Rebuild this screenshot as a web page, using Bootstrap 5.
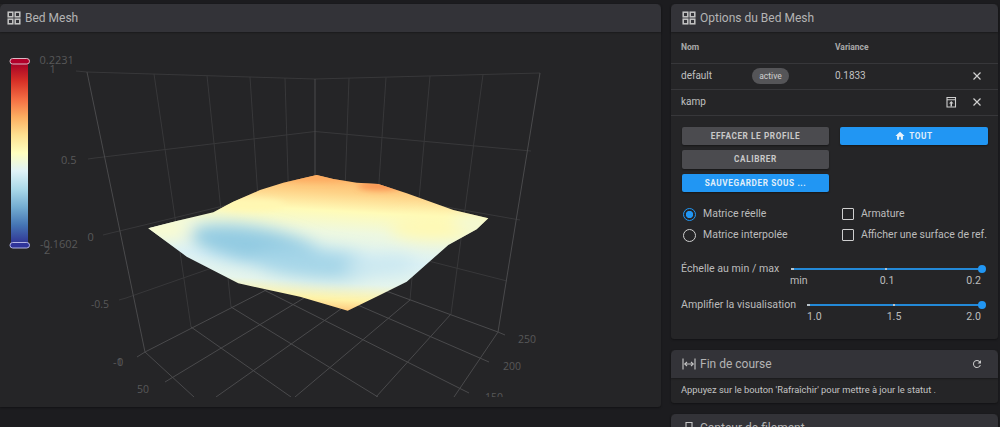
<!DOCTYPE html>
<html lang="fr">
<head>
<meta charset="utf-8">
<title>Bed Mesh</title>
<link href="https://cdn.jsdelivr.net/npm/bootstrap@5.3.0/dist/css/bootstrap.min.css" rel="stylesheet">
<style>
html,body{height:427px;overflow:hidden}
body{background:#1c1c1f;font-family:Roboto,"Liberation Sans",sans-serif;color:#c4c4c4;font-size:10px;line-height:1.2}
.page-wrap{padding:4px 2px 0 0;gap:10px;align-items:flex-start}
.main-col{width:661px;flex:none}
.side-col{width:327px;flex:none;gap:11px}
.panel{background:#252527;border:0;border-radius:3px;box-shadow:0 1px 2px rgba(0,0,0,.35);color:#c4c4c4}
.main-col .panel{border-radius:0 3px 3px 0}
.panel-head{height:28px;background:#333338;border:0;border-radius:3px 3px 0 0;padding:0 11px;font-size:12px;color:#b4b4b4;box-shadow:0 1px 2px rgba(0,0,0,.3);gap:4px}
.panel-head svg.hicon{width:14px;height:14px;flex:none;fill:none;stroke:#c6c6c6;stroke-width:1.5}
.chart-box{display:block;width:661px;height:365px}
.chart-foot{height:10px}
.chart-box text{font-family:"Open Sans","Noto Sans",sans-serif;font-size:11px;fill:#585859}
.mesh-table{--bs-table-bg:transparent;--bs-table-color:#c0c0c0;--bs-table-border-color:#37373a;margin:0;table-layout:fixed;font-size:10px;width:327px}
.mesh-table td,.mesh-table th{padding:0;vertical-align:middle;border-bottom:1.5px solid #37373a}
.mesh-table th{height:31px;font-size:8.5px;font-weight:700;color:#a9a9a9}
.mesh-table td{height:26px}
.cell-a{padding-left:10px!important;width:76px}
.cell-b{width:78px}
.cell-c{padding-left:10px!important;width:105px}
.act-cell{gap:14px;padding-right:15px;justify-content:flex-end;align-items:center}
.act-cell svg{width:12px;height:12px;display:block}
.state-pill{display:inline-block;background:#555558;border-radius:9px;color:#d0d0d0;font-size:8.5px;line-height:16px;width:37px;text-align:center;margin-left:5px}
.btn-zone{padding:11px 10px 0 11px;gap:11px}
.btn-stack{width:148px;gap:5px}
.act-btn{--bs-btn-padding-y:0;--bs-btn-padding-x:0;height:18.5px;font-size:8.2px;font-weight:700;letter-spacing:.6px;text-transform:uppercase;border:0;border-radius:2px;line-height:18.5px;box-shadow:0 1px 2px rgba(0,0,0,.4);display:flex;align-items:center;justify-content:center;gap:4px}
.act-grey{background:#4b4b4f;color:#c9c9c9}
.act-blue{background:#2196f3;color:#e0eef9}
.act-wide{width:148px}
.opt-grid{padding:15px 0 0 12px;display:grid;grid-template-columns:159px auto;row-gap:7px}
.opt-line{display:flex;align-items:center;min-height:14px;margin:0;padding:0;font-size:10.5px;color:#bcbcbc;gap:7px}
.opt-line .form-check-input{margin:0;width:13px;height:13px;flex:none;background-color:transparent;background-image:none;border:1.4px solid #cfcfcf;float:none}
.opt-line input[type=checkbox]{border-radius:1px;width:12px;height:12px;margin-right:0}
.opt-line input[type=radio]:checked{border-color:#2196f3;background-color:transparent;background-image:radial-gradient(circle,#2196f3 0,#2196f3 3.4px,transparent 3.9px)}
.scale-row{padding:0 16px 0 10px;display:flex;font-size:10.6px;color:#bcbcbc}
.scale-row.first-s{margin-top:20px}
.scale-row.second-s{margin-top:11px}
.scale-name{flex:none;line-height:13px}
.name-a{width:110px}
.name-b{width:126px}
.scale-body{flex:1 1 auto;min-width:0}
.scale-track{height:1.5px;background:#2389d8;margin-top:6px;display:flex;justify-content:space-between;align-items:center}
.scale-track i{display:block;width:2.5px;height:2.5px;background:#b8c4cc}
.scale-track b{display:block;width:8px;height:8px;border-radius:50%;background:#2196f3;margin-right:-4px}
.scale-ticks{display:flex;justify-content:space-between;font-size:10.6px;margin-top:5px;color:#bcbcbc;padding-right:1px}
.scale-ticks.shift-l{margin-left:-1px}
.opts-body{height:307px}
.note{padding:6px 10px 0;height:25px;font-size:9.35px;color:#c4c4c4}
.tool-btn{margin-left:auto;margin-right:4px;display:flex}
</style>
</head>
<body>
<div class="d-flex page-wrap">
  <div class="main-col">
    <div class="card panel">
      <div class="card-header panel-head d-flex align-items-center" style="padding-left:7px">
        <svg class="hicon" viewBox="0 0 14 14"><rect x="1.2" y="1.2" width="4.6" height="4.6"/><rect x="8.2" y="1.2" width="4.6" height="4.6"/><rect x="1.2" y="8.2" width="4.6" height="4.6"/><rect x="8.2" y="8.2" width="4.6" height="4.6"/></svg>
        <span>Bed Mesh</span>
      </div>
      <svg class="chart-box" viewBox="0 32 661 365" role="img" aria-label="Bed mesh surface">
        <defs>
          <linearGradient id="scaleGrad" x1="0" y1="0" x2="0" y2="1">
            <stop offset="0" stop-color="#a50026"/><stop offset=".1" stop-color="#d73027"/><stop offset=".2" stop-color="#f46d43"/><stop offset=".3" stop-color="#fdae61"/><stop offset=".4" stop-color="#fee090"/><stop offset=".5" stop-color="#ffffbf"/><stop offset=".6" stop-color="#e0f3f8"/><stop offset=".7" stop-color="#abd9e9"/><stop offset=".8" stop-color="#74add1"/><stop offset=".9" stop-color="#4575b4"/><stop offset="1" stop-color="#313695"/>
          </linearGradient>
          <linearGradient id="bandGrad" gradientUnits="userSpaceOnUse" x1="320" y1="172" x2="312" y2="312">
            <stop offset="0" stop-color="#fdae61"/><stop offset=".14" stop-color="#fed287"/><stop offset=".27" stop-color="#fffbb8"/><stop offset=".42" stop-color="#eef8e0"/><stop offset=".62" stop-color="#dcf1f5"/><stop offset=".78" stop-color="#e6f5ec"/><stop offset=".9" stop-color="#fff3a8"/><stop offset="1" stop-color="#fdbe72"/>
          </linearGradient>
          <clipPath id="meshClip"><polygon points="148.3,228.3 176.7,221 213.3,212.3 233.3,201.7 260,190 283.3,182.7 316.7,175 333.3,179 356.7,182.7 378.3,184 406.7,193.3 453.3,210 488.3,218.3 476.7,229.3 448.3,245 433.3,258.3 406.7,281.7 380,295 347.7,310.7 300,296.7 238.3,283.3 186.7,256.7"/></clipPath>
          <filter id="soft" x="-40%" y="-60%" width="180%" height="220%"><feGaussianBlur stdDeviation="8"/></filter>
          <filter id="softer" x="-30%" y="-60%" width="160%" height="220%"><feGaussianBlur stdDeviation="3"/></filter>
        </defs>
        <g fill="none" stroke="#38383a" stroke-width="1">
          <path d="M76 71L87 72L315 79L540 73"/>
          <path d="M88 159L95 158L315 131.5L531 151M103 235L111 233L315 184L520 220M119 300L126 298L315 232L507 281"/>
          <path d="M154 74L191 327M207 75.7L231 307M250 77L264 290M285 78L291 276M349 78L342 275M386 77.5L372 287M430 76L410 300M483 74.5L451 314"/>
        </g>
        <g fill="none" stroke="#4a4a4c" stroke-width="1">
          <path d="M87 72L145 352M315 79L315 265M540 73L498 332"/>
          <path d="M137 357L145 352L315 265L498 332L505 335M498 332L454 397M145 352L194 397"/>
          <path d="M165 382L342 275M216 397L372 287M295 397L410 300M376 397L451 314"/>
          <path d="M191 327L291 397M231 307L378 397M264 290L469 393M291 276L489 362"/>
        </g>
        <g clip-path="url(#meshClip)">
          <rect x="140" y="170" width="360" height="145" fill="url(#bandGrad)"/>
          <g filter="url(#soft)">
            <ellipse cx="160" cy="228" rx="28" ry="12" fill="#fafcd0"/>
            <ellipse cx="432" cy="228" rx="42" ry="12" fill="#fff9b4"/>
            <ellipse cx="258" cy="246" rx="68" ry="18" fill="#93cbe2" transform="rotate(10 258 246)"/>
            <ellipse cx="318" cy="264" rx="66" ry="15" fill="#a6d6e8" transform="rotate(4 318 264)"/>
            <ellipse cx="380" cy="266" rx="36" ry="10" fill="#cbe8f0" transform="rotate(-4 380 266)"/>
            <ellipse cx="475" cy="222" rx="22" ry="6" fill="#eef8e0"/>
          </g>
          <g filter="url(#softer)">
            <ellipse cx="380" cy="186" rx="22" ry="4" fill="#f98f50"/>
            <ellipse cx="315" cy="177" rx="42" ry="4" fill="#fda95e"/>
            <ellipse cx="250" cy="205" rx="35" ry="6" fill="#fff7b2"/>
          </g>
        </g>
        <rect x="11" y="63" width="17" height="180" fill="url(#scaleGrad)"/>
        <rect x="10" y="58.5" width="19.5" height="5.5" rx="2.7" fill="#b2002a" stroke="#d9b9c4" stroke-width="1"/>
        <rect x="10" y="242.5" width="19.5" height="5.5" rx="2.7" fill="#2f349a" stroke="#b3b5e6" stroke-width="1"/>
        <text x="39.5" y="64">0.2231</text>
        <text x="49.5" y="73">1</text>
        <text x="61" y="164">0.5</text>
        <text x="87.5" y="240.5">0</text>
        <text x="40" y="248">-0.1602</text>
        <text x="44" y="254">2</text>
        <text x="91" y="308" textLength="18" lengthAdjust="spacingAndGlyphs">-0.5</text>
        <text x="113" y="366">-1</text><text x="117" y="366">0</text>
        <text x="137" y="393" textLength="12" lengthAdjust="spacingAndGlyphs">50</text>
        <text x="518" y="343" textLength="18" lengthAdjust="spacingAndGlyphs">250</text>
        <text x="503" y="370" textLength="18" lengthAdjust="spacingAndGlyphs">200</text>
        <text x="485" y="401" textLength="18" lengthAdjust="spacingAndGlyphs">150</text>
      </svg>
      <div class="chart-foot"></div>
    </div>
  </div>
  <div class="side-col d-flex flex-column">
    <div class="card panel">
      <div class="card-header panel-head d-flex align-items-center">
        <svg class="hicon" viewBox="0 0 14 14"><rect x="1.2" y="1.2" width="4.6" height="4.6"/><rect x="8.2" y="1.2" width="4.6" height="4.6"/><rect x="1.2" y="8.2" width="4.6" height="4.6"/><rect x="8.2" y="8.2" width="4.6" height="4.6"/></svg>
        <span>Options du Bed Mesh</span>
      </div>
      <div class="opts-body">
        <table class="table mesh-table">
          <thead><tr><th class="cell-a">Nom</th><th class="cell-b"></th><th class="cell-c">Variance</th><th></th></tr></thead>
          <tbody>
            <tr><td class="cell-a">default</td><td class="cell-b"><span class="state-pill">active</span></td><td class="cell-c">0.1833</td>
              <td><div class="d-flex act-cell"><svg viewBox="0 0 12 12"><path d="M2.5 2.5L9.5 9.5M9.5 2.5L2.5 9.5" stroke="#d0d0d0" stroke-width="1.2" fill="none"/></svg></div></td></tr>
            <tr><td class="cell-a">kamp</td><td class="cell-b"></td><td class="cell-c"></td>
              <td><div class="d-flex act-cell"><svg viewBox="0 0 12 12"><path d="M2 1.5H10.5V11H2ZM2 3.7H10.5" stroke="#cfcfcf" stroke-width="1.1" fill="none"/><path d="M6.25 5L8.5 7.4H7V10.5H5.5V7.4H4Z" fill="#cfcfcf"/></svg><svg viewBox="0 0 12 12"><path d="M2.5 2.5L9.5 9.5M9.5 2.5L2.5 9.5" stroke="#d0d0d0" stroke-width="1.2" fill="none"/></svg></div></td></tr>
          </tbody>
        </table>
        <div class="d-flex btn-zone">
          <div class="d-flex flex-column btn-stack">
            <button type="button" class="btn act-btn act-grey">Effacer le profile</button>
            <button type="button" class="btn act-btn act-grey">Calibrer</button>
            <button type="button" class="btn act-btn act-blue">Sauvegarder sous ...</button>
          </div>
          <div>
            <button type="button" class="btn act-btn act-blue act-wide"><svg width="10" height="10" viewBox="0 0 24 24"><path d="M10 21V14H14V21H19V12H23L12 2L1 12H5V21Z" fill="#e8f3fb"/></svg>Tout</button>
          </div>
        </div>
        <div class="opt-grid">
          <label class="form-check opt-line"><input class="form-check-input" type="radio" name="mx" checked>Matrice réelle</label>
          <label class="form-check opt-line"><input class="form-check-input" type="checkbox">Armature</label>
          <label class="form-check opt-line"><input class="form-check-input" type="radio" name="mx">Matrice interpolée</label>
          <label class="form-check opt-line"><input class="form-check-input" type="checkbox">Afficher une surface de ref.</label>
        </div>
        <div class="scale-row first-s">
          <div class="scale-name name-a">Échelle au min / max</div>
          <div class="scale-body">
            <div class="scale-track"><i></i><i></i><b></b></div>
            <div class="scale-ticks shift-l"><span>min</span><span>0.1</span><span>0.2</span></div>
          </div>
        </div>
        <div class="scale-row second-s">
          <div class="scale-name name-b">Amplifier la visualisation</div>
          <div class="scale-body">
            <div class="scale-track"><i></i><i></i><b></b></div>
            <div class="scale-ticks"><span>1.0</span><span>1.5</span><span>2.0</span></div>
          </div>
        </div>
      </div>
    </div>
    <div class="card panel">
      <div class="card-header panel-head d-flex align-items-center">
        <svg class="hicon" viewBox="0 0 14 14" style="stroke-width:1.1"><path d="M1 1.5V12.5M13 1.5V12.5M2.8 7H11.2"/><path d="M5 5L2.8 7L5 9M9 5L11.2 7L9 9"/></svg>
        <span>Fin de course</span>
        <span class="tool-btn"><svg width="12" height="12" viewBox="0 0 24 24"><path d="M17.65 6.35A8 8 0 1 0 19.73 14H17.65A6 6 0 1 1 12 6C13.66 6 15.14 6.69 16.22 7.78L13 11H20V4Z" fill="#c6c6c6"/></svg></span>
      </div>
      <div class="note">Appuyez sur le bouton 'Rafraîchir' pour mettre à jour le statut .</div>
    </div>
    <div class="card panel">
      <div class="card-header panel-head d-flex align-items-center">
        <svg class="hicon" viewBox="0 0 14 14" style="stroke-width:1.1"><path d="M4 1.5H10V8H4ZM2 8H12V10M5 10V13M9 10V13"/></svg>
        <span>Capteur de filament</span>
      </div>
    </div>
  </div>
</div>
<script src="https://cdn.jsdelivr.net/npm/bootstrap@5.3.0/dist/js/bootstrap.bundle.min.js"></script>
</body>
</html>
